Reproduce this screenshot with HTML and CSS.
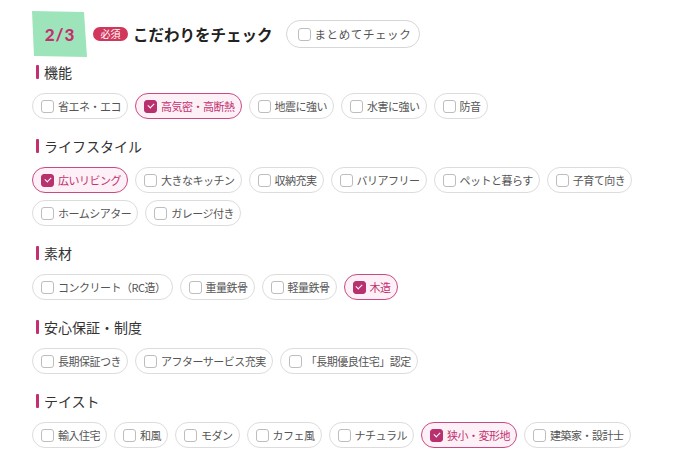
FILE: index.html
```html
<!DOCTYPE html>
<html lang="ja">
<head>
<meta charset="utf-8">
<link rel="stylesheet" href="styles.css">
</head>
<body>
<div class="page">
  <div class="header">
    <div class="step"><span class="step-text">2/3</span></div>
    <span class="required">必須</span>
    <h1 class="title">こだわりをチェック</h1>
    <button class="bulk"><span class="box"></span>まとめてチェック</button>
  </div>

  <section class="section">
    <h2 class="sec-title">機能</h2>
    <div class="chips">
      <span class="chip"><span class="box"></span>省エネ・エコ</span>
      <span class="chip on"><span class="box"></span>高気密・高断熱</span>
      <span class="chip"><span class="box"></span>地震に強い</span>
      <span class="chip"><span class="box"></span>水害に強い</span>
      <span class="chip"><span class="box"></span>防音</span>
    </div>
  </section>

  <section class="section">
    <h2 class="sec-title">ライフスタイル</h2>
    <div class="chips">
      <span class="chip on"><span class="box"></span>広いリビング</span>
      <span class="chip"><span class="box"></span>大きなキッチン</span>
      <span class="chip"><span class="box"></span>収納充実</span>
      <span class="chip"><span class="box"></span>バリアフリー</span>
      <span class="chip"><span class="box"></span>ペットと暮らす</span>
      <span class="chip"><span class="box"></span>子育て向き</span>
      <span class="chip"><span class="box"></span>ホームシアター</span>
      <span class="chip"><span class="box"></span>ガレージ付き</span>
    </div>
  </section>

  <section class="section">
    <h2 class="sec-title">素材</h2>
    <div class="chips">
      <span class="chip"><span class="box"></span>コンクリート（RC造）</span>
      <span class="chip"><span class="box"></span>重量鉄骨</span>
      <span class="chip"><span class="box"></span>軽量鉄骨</span>
      <span class="chip on"><span class="box"></span>木造</span>
    </div>
  </section>

  <section class="section">
    <h2 class="sec-title">安心保証・制度</h2>
    <div class="chips">
      <span class="chip"><span class="box"></span>長期保証つき</span>
      <span class="chip"><span class="box"></span>アフターサービス充実</span>
      <span class="chip"><span class="box"></span>「長期優良住宅」認定</span>
    </div>
  </section>

  <section class="section">
    <h2 class="sec-title">テイスト</h2>
    <div class="chips">
      <span class="chip"><span class="box"></span>輸入住宅</span>
      <span class="chip"><span class="box"></span>和風</span>
      <span class="chip"><span class="box"></span>モダン</span>
      <span class="chip"><span class="box"></span>カフェ風</span>
      <span class="chip"><span class="box"></span>ナチュラル</span>
      <span class="chip on"><span class="box"></span>狭小・変形地</span>
      <span class="chip"><span class="box"></span>建築家・設計士</span>
    </div>
  </section>
</div>
</body>
</html>
```

FILE: styles.css
```css
* { box-sizing: border-box; }

html, body {
  margin: 0;
  padding: 0;
  background: #ffffff;
}

body {
  font-family: "Noto Sans CJK JP", "Noto Sans", sans-serif;
  color: #333333;
}

.page {
  padding: 11px 0 0 32px;
  width: 700px;
}

.header {
  display: flex;
  align-items: center;
  height: 46px;
  margin-bottom: 5px;
}

.step {
  width: 55px;
  height: 46px;
  background: #9ee4bb;
  clip-path: polygon(0 0, 52px 1px, 55px 46px, 2px 45px);
  display: flex;
  align-items: center;
  justify-content: center;
  margin-right: 6px;
}

.step-text {
  font-family: "Lato", "DejaVu Sans", sans-serif;
  font-weight: 900;
  font-size: 17px;
  letter-spacing: 1px;
  color: #c2306f;
  padding-left: 1px;
  margin-top: 1px;
}

.required {
  display: inline-flex;
  align-items: center;
  justify-content: center;
  width: 35px;
  height: 14px;
  border-radius: 7px;
  background: #d1365b;
  color: #ffffff;
  font-size: 10px;
  line-height: 1;
  margin-right: 5px;
}

.title {
  margin: 0 13px 0 0;
  font-size: 15.5px;
  font-weight: 700;
  color: #222222;
  letter-spacing: 0;
  line-height: 20px;
}

.bulk {
  display: inline-flex;
  align-items: center;
  gap: 4px;
  height: 28px;
  padding: 0 8px 0 11px;
  border: 1px solid #d6d6d6;
  border-radius: 14px;
  background: #ffffff;
  font-family: inherit;
  font-size: 11.5px;
  letter-spacing: 0.6px;
  color: #555555;
  white-space: nowrap;
}

.bulk .box {
  width: 13px;
  height: 13px;
}

.box {
  flex: none;
  width: 13px;
  height: 13px;
  border: 1.5px solid #bdbdbd;
  border-radius: 3px;
  background: #ffffff;
  position: relative;
}

.section {
  margin-bottom: 17px;
}

.sec-title {
  display: flex;
  align-items: center;
  gap: 5px;
  height: 20px;
  margin: 0 0 11px 4px;
  font-size: 14px;
  font-weight: 400;
  color: #333333;
}

.sec-title::before {
  content: "";
  width: 3px;
  height: 14px;
  border-radius: 1px;
  background: #c2306f;
}

.chips {
  display: flex;
  flex-wrap: wrap;
  gap: 7px 7px;
  width: 640px;
}

.chip {
  display: inline-flex;
  align-items: center;
  gap: 4px;
  height: 26px;
  padding: 0 6px 0 8px;
  border: 1px solid #dcdcdc;
  border-radius: 13px;
  background: #ffffff;
  font-size: 11px;
  letter-spacing: -0.5px;
  line-height: 1;
  color: #555555;
  white-space: nowrap;
}

.chip.on {
  border-color: #c94a83;
  background: #fdf0f6;
  color: #c2306f;
}

.chip.on .box {
  background: #b8306d;
  border-color: #b8306d;
}

.chip.on .box::after {
  content: "";
  position: absolute;
  left: 2.5px;
  top: 2px;
  width: 5px;
  height: 3px;
  border-left: 1.8px solid #ffffff;
  border-bottom: 1.8px solid #ffffff;
  transform: rotate(-45deg);
}
```
